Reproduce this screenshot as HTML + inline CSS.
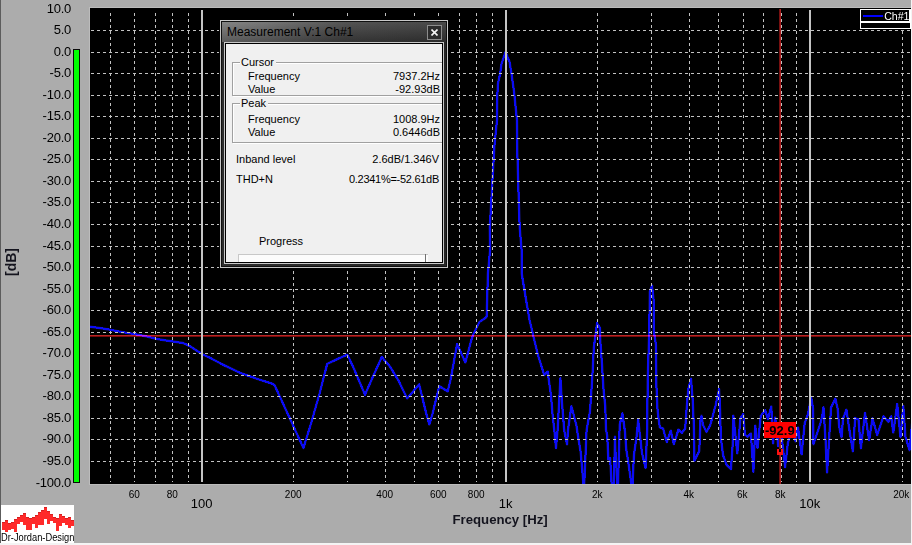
<!DOCTYPE html>
<html><head><meta charset="utf-8"><style>
*{margin:0;padding:0;box-sizing:border-box}
html,body{width:912px;height:545px;overflow:hidden;background:#acacac;font-family:"Liberation Sans",sans-serif;position:relative}
.yl{position:absolute;left:0;width:71px;text-align:right;font-size:13px;letter-spacing:-0.25px;line-height:16px;height:16px;color:#000}
.xs{position:absolute;top:488.5px;width:60px;text-align:center;font-size:10px;line-height:12px;color:#000}
.xb{position:absolute;top:497px;width:60px;text-align:center;font-size:13px;line-height:14px;color:#000}
.dlg{position:absolute;left:220px;top:20px;width:228px;height:248px}
.lbl{position:absolute;font-size:11px;line-height:13px;color:#000;white-space:nowrap}
.val{position:absolute;right:0;font-size:11px;line-height:13px;color:#000;white-space:nowrap;text-align:right}
</style></head><body>
<div style="position:absolute;left:0;top:0;width:1px;height:545px;background:#5c5c5c"></div>
<svg width="912" height="545" viewBox="0 0 912 545" style="position:absolute;left:0;top:0">
<defs><pattern id="hd" patternUnits="userSpaceOnUse" width="6" height="6"><rect x="1" y="0" width="3" height="6" fill="#c2c2c2"/></pattern><pattern id="vd" patternUnits="userSpaceOnUse" width="6" height="6"><rect x="0" y="1" width="6" height="3" fill="#c2c2c2"/></pattern><clipPath id="pc"><rect x="90" y="8" width="821" height="476"/></clipPath></defs>
<rect x="89" y="7" width="823" height="478" fill="#bcbcbc"/>
<rect x="90" y="8" width="821" height="476" fill="#000"/>
<g clip-path="url(#pc)"><path d="M90.0 326.8 L99.6 328.0 L111.1 329.9 L122.7 332.2 L134.3 334.1 L145.8 336.2 L155.8 338.7 L163.1 340.0 L173.2 341.6 L183.2 343.1 L189.3 345.8 L201.7 353.9 L210.0 357.8 L222.6 364.5 L240.2 372.9 L257.9 379.1 L272.8 383.9 L274.6 385.2 L292.4 424.0 L303.4 448.0 L310.9 424.0 L319.7 393.0 L324.1 375.8 L327.2 363.9 L336.4 359.5 L347.4 354.7 L354.0 368.8 L365.0 394.7 L371.7 379.4 L381.8 357.0 L390.0 366.6 L398.2 380.0 L407.2 398.5 L419.1 384.4 L426.1 413.0 L429.4 424.5 L432.7 413.0 L439.3 386.1 L447.7 391.4 L450.5 380.0 L457.1 344.2 L465.4 362.4 L471.4 339.8 L473.5 333.8 L479.4 322.0 L486.0 317.6 L486.7 316.2 L487.9 273.5 L490.1 250.0 L489.8 227.4 L492.2 184.4 L494.6 143.9 L497.0 120.0 L497.2 98.7 L497.9 84.0 L500.1 73.8 L501.6 63.5 L505.5 52.0 L509.6 62.0 L511.9 76.7 L514.0 91.4 L515.5 106.0 L517.0 120.0 L517.3 151.0 L518.5 191.6 L519.7 227.4 L521.6 250.0 L521.7 273.5 L526.1 300.0 L529.5 320.0 L533.2 335.4 L537.6 353.8 L544.2 375.0 L547.7 371.7 L548.8 379.9 L551.0 395.3 L552.7 416.3 L554.3 430.0 L556.0 448.0 L557.6 430.0 L560.4 378.3 L562.0 403.0 L564.2 430.0 L567.0 444.3 L568.0 430.0 L571.4 406.3 L576.3 425.0 L580.7 452.5 L584.0 490.0 L586.6 430.0 L589.9 411.9 L591.0 397.5 L592.7 370.0 L593.8 348.0 L595.5 334.8 L597.1 323.3 L599.9 328.0 L600.4 342.5 L602.0 364.6 L603.7 392.0 L605.3 406.3 L606.0 430.0 L607.2 435.5 L608.4 459.4 L610.1 458.2 L612.0 490.0 L613.7 490.0 L615.0 436.7 L615.5 452.2 L617.9 490.0 L619.7 424.8 L622.4 413.5 L625.0 432.0 L626.3 449.8 L628.6 464.2 L632.2 490.0 L634.0 454.6 L636.4 437.9 L638.2 420.0 L640.0 436.0 L642.0 453.2 L645.6 467.9 L647.2 430.0 L647.7 380.0 L649.3 330.0 L649.8 292.0 L652.0 285.4 L653.7 300.8 L653.7 330.0 L655.9 344.8 L656.4 385.0 L657.6 410.8 L659.8 427.4 L663.1 428.5 L666.8 442.0 L670.8 430.7 L673.8 444.0 L678.5 429.6 L681.9 432.9 L685.2 428.5 L686.3 413.0 L688.3 389.2 L691.0 378.8 L692.7 400.2 L693.8 425.0 L694.5 460.6 L699.3 451.0 L700.5 420.0 L701.5 415.7 L702.9 424.8 L706.5 432.0 L710.3 425.0 L715.8 404.6 L719.1 389.2 L720.2 413.5 L720.8 438.0 L723.2 455.8 L726.8 465.3 L731.0 469.0 L732.7 443.9 L733.4 415.7 L735.0 431.3 L737.3 453.3 L740.5 418.0 L743.2 414.2 L744.9 434.6 L747.6 436.8 L750.9 433.5 L753.4 471.7 L755.3 425.7 L757.5 447.8 L760.8 415.8 L765.2 410.3 L768.0 419.1 L771.3 406.5 L773.1 443.3 L775.2 417.5 L778.2 446.0 L781.0 430.0 L785.1 467.1 L787.8 443.3 L788.8 439.6 L792.0 428.0 L795.6 441.4 L798.0 427.4 L801.6 454.3 L804.7 423.0 L808.0 414.1 L811.3 397.6 L813.0 408.6 L813.5 444.2 L818.0 430.7 L820.2 424.0 L822.4 415.2 L823.5 407.5 L825.5 439.5 L827.1 472.4 L831.0 407.5 L835.4 398.7 L837.6 408.6 L839.3 427.4 L841.5 437.3 L843.1 418.5 L846.4 409.7 L849.7 431.8 L852.8 451.2 L855.2 418.0 L858.5 419.6 L860.9 448.2 L865.0 413.0 L869.1 440.1 L872.5 418.5 L877.2 435.0 L883.5 416.3 L888.4 421.9 L891.2 416.3 L893.3 432.5 L897.2 404.2 L900.5 437.0 L903.3 405.9 L905.5 437.0 L909.5 450.2 L912.0 424.0" fill="none" stroke="#141470" stroke-width="2.5" stroke-linejoin="round" stroke-linecap="round"/><path d="M90.0 326.8 L99.6 328.0 L111.1 329.9 L122.7 332.2 L134.3 334.1 L145.8 336.2 L155.8 338.7 L163.1 340.0 L173.2 341.6 L183.2 343.1 L189.3 345.8 L201.7 353.9 L210.0 357.8 L222.6 364.5 L240.2 372.9 L257.9 379.1 L272.8 383.9 L274.6 385.2 L292.4 424.0 L303.4 448.0 L310.9 424.0 L319.7 393.0 L324.1 375.8 L327.2 363.9 L336.4 359.5 L347.4 354.7 L354.0 368.8 L365.0 394.7 L371.7 379.4 L381.8 357.0 L390.0 366.6 L398.2 380.0 L407.2 398.5 L419.1 384.4 L426.1 413.0 L429.4 424.5 L432.7 413.0 L439.3 386.1 L447.7 391.4 L450.5 380.0 L457.1 344.2 L465.4 362.4 L471.4 339.8 L473.5 333.8 L479.4 322.0 L486.0 317.6 L486.7 316.2 L487.9 273.5 L490.1 250.0 L489.8 227.4 L492.2 184.4 L494.6 143.9 L497.0 120.0 L497.2 98.7 L497.9 84.0 L500.1 73.8 L501.6 63.5 L505.5 52.0 L509.6 62.0 L511.9 76.7 L514.0 91.4 L515.5 106.0 L517.0 120.0 L517.3 151.0 L518.5 191.6 L519.7 227.4 L521.6 250.0 L521.7 273.5 L526.1 300.0 L529.5 320.0 L533.2 335.4 L537.6 353.8 L544.2 375.0 L547.7 371.7 L548.8 379.9 L551.0 395.3 L552.7 416.3 L554.3 430.0 L556.0 448.0 L557.6 430.0 L560.4 378.3 L562.0 403.0 L564.2 430.0 L567.0 444.3 L568.0 430.0 L571.4 406.3 L576.3 425.0 L580.7 452.5 L584.0 490.0 L586.6 430.0 L589.9 411.9 L591.0 397.5 L592.7 370.0 L593.8 348.0 L595.5 334.8 L597.1 323.3 L599.9 328.0 L600.4 342.5 L602.0 364.6 L603.7 392.0 L605.3 406.3 L606.0 430.0 L607.2 435.5 L608.4 459.4 L610.1 458.2 L612.0 490.0 L613.7 490.0 L615.0 436.7 L615.5 452.2 L617.9 490.0 L619.7 424.8 L622.4 413.5 L625.0 432.0 L626.3 449.8 L628.6 464.2 L632.2 490.0 L634.0 454.6 L636.4 437.9 L638.2 420.0 L640.0 436.0 L642.0 453.2 L645.6 467.9 L647.2 430.0 L647.7 380.0 L649.3 330.0 L649.8 292.0 L652.0 285.4 L653.7 300.8 L653.7 330.0 L655.9 344.8 L656.4 385.0 L657.6 410.8 L659.8 427.4 L663.1 428.5 L666.8 442.0 L670.8 430.7 L673.8 444.0 L678.5 429.6 L681.9 432.9 L685.2 428.5 L686.3 413.0 L688.3 389.2 L691.0 378.8 L692.7 400.2 L693.8 425.0 L694.5 460.6 L699.3 451.0 L700.5 420.0 L701.5 415.7 L702.9 424.8 L706.5 432.0 L710.3 425.0 L715.8 404.6 L719.1 389.2 L720.2 413.5 L720.8 438.0 L723.2 455.8 L726.8 465.3 L731.0 469.0 L732.7 443.9 L733.4 415.7 L735.0 431.3 L737.3 453.3 L740.5 418.0 L743.2 414.2 L744.9 434.6 L747.6 436.8 L750.9 433.5 L753.4 471.7 L755.3 425.7 L757.5 447.8 L760.8 415.8 L765.2 410.3 L768.0 419.1 L771.3 406.5 L773.1 443.3 L775.2 417.5 L778.2 446.0 L781.0 430.0 L785.1 467.1 L787.8 443.3 L788.8 439.6 L792.0 428.0 L795.6 441.4 L798.0 427.4 L801.6 454.3 L804.7 423.0 L808.0 414.1 L811.3 397.6 L813.0 408.6 L813.5 444.2 L818.0 430.7 L820.2 424.0 L822.4 415.2 L823.5 407.5 L825.5 439.5 L827.1 472.4 L831.0 407.5 L835.4 398.7 L837.6 408.6 L839.3 427.4 L841.5 437.3 L843.1 418.5 L846.4 409.7 L849.7 431.8 L852.8 451.2 L855.2 418.0 L858.5 419.6 L860.9 448.2 L865.0 413.0 L869.1 440.1 L872.5 418.5 L877.2 435.0 L883.5 416.3 L888.4 421.9 L891.2 416.3 L893.3 432.5 L897.2 404.2 L900.5 437.0 L903.3 405.9 L905.5 437.0 L909.5 450.2 L912.0 424.0" fill="none" stroke="#0c0cf4" stroke-width="2" stroke-linejoin="round" stroke-linecap="round" shape-rendering="crispEdges"/></g>
<g shape-rendering="crispEdges">
<rect x="90" y="30" width="821" height="1" fill="url(#hd)"/>
<rect x="90" y="52" width="821" height="1" fill="url(#hd)"/>
<rect x="90" y="73" width="821" height="1" fill="url(#hd)"/>
<rect x="90" y="95" width="821" height="1" fill="url(#hd)"/>
<rect x="90" y="116" width="821" height="1" fill="url(#hd)"/>
<rect x="90" y="138" width="821" height="1" fill="url(#hd)"/>
<rect x="90" y="159" width="821" height="1" fill="url(#hd)"/>
<rect x="90" y="181" width="821" height="1" fill="url(#hd)"/>
<rect x="90" y="202" width="821" height="1" fill="url(#hd)"/>
<rect x="90" y="224" width="821" height="1" fill="url(#hd)"/>
<rect x="90" y="246" width="821" height="1" fill="url(#hd)"/>
<rect x="90" y="267" width="821" height="1" fill="url(#hd)"/>
<rect x="90" y="289" width="821" height="1" fill="url(#hd)"/>
<rect x="90" y="310" width="821" height="1" fill="url(#hd)"/>
<rect x="90" y="332" width="821" height="1" fill="url(#hd)"/>
<rect x="90" y="353" width="821" height="1" fill="url(#hd)"/>
<rect x="90" y="375" width="821" height="1" fill="url(#hd)"/>
<rect x="90" y="396" width="821" height="1" fill="url(#hd)"/>
<rect x="90" y="418" width="821" height="1" fill="url(#hd)"/>
<rect x="90" y="439" width="821" height="1" fill="url(#hd)"/>
<rect x="90" y="461" width="821" height="1" fill="url(#hd)"/>
<rect x="110" y="10" width="1" height="472" fill="url(#vd)"/>
<rect x="134" y="10" width="1" height="472" fill="url(#vd)"/>
<rect x="155" y="10" width="1" height="472" fill="url(#vd)"/>
<rect x="172" y="10" width="1" height="472" fill="url(#vd)"/>
<rect x="188" y="10" width="1" height="472" fill="url(#vd)"/>
<rect x="293" y="10" width="1" height="472" fill="url(#vd)"/>
<rect x="347" y="10" width="1" height="472" fill="url(#vd)"/>
<rect x="385" y="10" width="1" height="472" fill="url(#vd)"/>
<rect x="414" y="10" width="1" height="472" fill="url(#vd)"/>
<rect x="438" y="10" width="1" height="472" fill="url(#vd)"/>
<rect x="459" y="10" width="1" height="472" fill="url(#vd)"/>
<rect x="476" y="10" width="1" height="472" fill="url(#vd)"/>
<rect x="492" y="10" width="1" height="472" fill="url(#vd)"/>
<rect x="597" y="10" width="1" height="472" fill="url(#vd)"/>
<rect x="651" y="10" width="1" height="472" fill="url(#vd)"/>
<rect x="689" y="10" width="1" height="472" fill="url(#vd)"/>
<rect x="718" y="10" width="1" height="472" fill="url(#vd)"/>
<rect x="743" y="10" width="1" height="472" fill="url(#vd)"/>
<rect x="763" y="10" width="1" height="472" fill="url(#vd)"/>
<rect x="781" y="10" width="1" height="472" fill="url(#vd)"/>
<rect x="796" y="10" width="1" height="472" fill="url(#vd)"/>
<rect x="902" y="10" width="1" height="472" fill="url(#vd)"/>
<rect x="201" y="10" width="2" height="472" fill="#c4c4c4"/>
<rect x="505" y="10" width="2" height="472" fill="#c4c4c4"/>
<rect x="809" y="10" width="2" height="472" fill="#c4c4c4"/>
</g>
<g shape-rendering="crispEdges" style="mix-blend-mode:lighten">
<rect x="90" y="335" width="821" height="1" fill="#b82424"/><rect x="90" y="336" width="821" height="1" fill="#7a0c0c"/>
</g>
<rect x="779" y="9" width="1" height="475" fill="#781010" shape-rendering="crispEdges"/><rect x="780" y="9" width="1" height="475" fill="#aa2020" shape-rendering="crispEdges"/>
<rect x="764" y="422" width="32" height="16" fill="#ff0000" stroke="#a01010" stroke-width="0" shape-rendering="crispEdges"/>
<rect x="777" y="449" width="6" height="6" fill="#ff1010" shape-rendering="crispEdges"/>
<rect x="779" y="449" width="2" height="3" fill="#000" shape-rendering="crispEdges"/>
<text x="765" y="435" font-family="Liberation Sans" font-size="13" font-weight="bold" fill="#000">-92.9</text>
<g shape-rendering="crispEdges"><rect x="860" y="9" width="51" height="20" fill="#fff"/><rect x="861" y="10" width="48" height="11" fill="#000"/><rect x="861" y="23" width="49" height="5" fill="#000"/><rect x="863" y="15" width="20" height="2" fill="#0000ff"/></g>
<text x="884.2" y="20" font-family="Liberation Sans" font-size="10.6" fill="#fff">Ch#1</text>
<g shape-rendering="crispEdges"><rect x="73" y="49" width="7" height="434" fill="#0a0a0a"/><rect x="74" y="50" width="5" height="432" fill="#00ff00"/></g>
</svg>
<div style="position:absolute;left:911px;top:0;width:1px;height:545px;background:#f4f4f4"></div>
<div style="position:absolute;left:0;top:543px;width:912px;height:2px;background:#f4f4f4"></div>
<div class="yl" style="top:1px">10.0</div>
<div class="yl" style="top:22px">5.0</div>
<div class="yl" style="top:44px">0.0</div>
<div class="yl" style="top:65px">-5.0</div>
<div class="yl" style="top:87px">-10.0</div>
<div class="yl" style="top:108px">-15.0</div>
<div class="yl" style="top:130px">-20.0</div>
<div class="yl" style="top:151px">-25.0</div>
<div class="yl" style="top:173px">-30.0</div>
<div class="yl" style="top:194px">-35.0</div>
<div class="yl" style="top:216px">-40.0</div>
<div class="yl" style="top:238px">-45.0</div>
<div class="yl" style="top:259px">-50.0</div>
<div class="yl" style="top:281px">-55.0</div>
<div class="yl" style="top:302px">-60.0</div>
<div class="yl" style="top:324px">-65.0</div>
<div class="yl" style="top:345px">-70.0</div>
<div class="yl" style="top:367px">-75.0</div>
<div class="yl" style="top:388px">-80.0</div>
<div class="yl" style="top:410px">-85.0</div>
<div class="yl" style="top:431px">-90.0</div>
<div class="yl" style="top:453px">-95.0</div>
<div class="yl" style="top:475px">-100.0</div>
<div class="xs" style="left:104.3px">60</div>
<div class="xs" style="left:142.2px">80</div>
<div class="xs" style="left:263.2px">200</div>
<div class="xs" style="left:354.7px">400</div>
<div class="xs" style="left:408.3px">600</div>
<div class="xs" style="left:446.2px">800</div>
<div class="xs" style="left:567.2px">2k</div>
<div class="xs" style="left:658.7px">4k</div>
<div class="xs" style="left:712.3px">6k</div>
<div class="xs" style="left:750.2px">8k</div>
<div class="xs" style="left:871.2px">20k</div>
<div class="xb" style="left:171.7px">100</div>
<div class="xb" style="left:475.7px">1k</div>
<div class="xb" style="left:779.7px">10k</div>
<div style="position:absolute;left:452.5px;top:512px;font-size:13.2px;font-weight:bold;line-height:16px;color:#14141e">Frequency [Hz]</div>
<div style="position:absolute;left:3px;top:276px;transform:rotate(-90deg);transform-origin:0 0;font-size:14px;font-weight:bold;line-height:16px;color:#14141e">[dB]</div>
<div style="position:absolute;left:219px;top:19px;width:230px;height:250px;background:#000"></div><div class="dlg">
<div style="position:absolute;left:0;top:0;width:228px;height:248px;background:#c8c8c8"></div>
<div style="position:absolute;left:1px;top:1px;width:226px;height:246px;background:#101010"></div>
<div style="position:absolute;left:2px;top:2px;width:224px;height:20px;background:linear-gradient(90deg,#7a7a7a 0%,#6a6a6a 20%,#454545 55%,#3a3a3a 100%)"></div>
<div style="position:absolute;left:2px;top:2px;width:224px;height:20px;background:linear-gradient(180deg,rgba(255,255,255,0.08),rgba(0,0,0,0.25))"></div>
<div style="position:absolute;left:2px;top:22px;width:224px;height:224px;background:linear-gradient(90deg,#2e2e2e,#262626)"></div>
<div style="position:absolute;left:7px;top:5px;font-size:12px;line-height:15px;color:#000;white-space:nowrap">Measurement V:1 Ch#1</div>
<div style="position:absolute;left:207px;top:5px;width:15px;height:15px;border:1px solid #8c8c8c;background:#2c2c2c"></div>
<svg style="position:absolute;left:211px;top:9px" width="7" height="7"><path d="M0.5 0.5L6.5 6.5M6.5 0.5L0.5 6.5" stroke="#f4f4f4" stroke-width="1.6"/></svg>
<div style="position:absolute;left:4px;top:22px;width:220px;height:222px;background:#c8c8c8"></div>
<div style="position:absolute;left:5px;top:23px;width:218px;height:220px;background:#000"></div>
<div style="position:absolute;left:6px;top:24px;width:216px;height:218px;background:#f0f0f0;overflow:hidden">
  <div style="position:absolute;left:6px;top:18px;width:230px;height:34px;border:1px solid #a0a0a0;box-shadow:1px 1px 0 #fff inset, 1px 1px 0 #fff"></div>
  <div class="lbl" style="left:14px;top:12px;background:#f0f0f0;padding:0 2px 0 1px">Cursor</div>
  <div class="lbl" style="left:22px;top:26px">Frequency</div>
  <div class="lbl" style="left:22px;top:39px">Value</div>
  <div class="val" style="right:2px;top:26px">7937.2Hz</div>
  <div class="val" style="right:2px;top:39px">-92.93dB</div>
  <div style="position:absolute;left:6px;top:59px;width:230px;height:40px;border:1px solid #a0a0a0;box-shadow:1px 1px 0 #fff inset, 1px 1px 0 #fff"></div>
  <div class="lbl" style="left:14px;top:53px;background:#f0f0f0;padding:0 2px 0 1px">Peak</div>
  <div class="lbl" style="left:22px;top:69px">Frequency</div>
  <div class="lbl" style="left:22px;top:82px">Value</div>
  <div class="val" style="right:2px;top:69px">1008.9Hz</div>
  <div class="val" style="right:2px;top:82px">0.6446dB</div>
  <div class="lbl" style="left:10px;top:109px">Inband level</div>
  <div class="val" style="right:3px;top:109px">2.6dB/1.346V</div>
  <div class="lbl" style="left:10px;top:129px">THD+N</div>
  <div class="val" style="right:3px;top:129px;letter-spacing:-0.28px">0.2341%=-52.61dB</div>
  <div class="lbl" style="left:33px;top:191px">Progress</div>
  <div style="position:absolute;left:12px;top:210px;width:190px;height:14px;border-top:1px solid #c8c8c8;border-left:1px solid #c8c8c8;background:#fcfcfc"></div>
  <div style="position:absolute;left:199px;top:210px;width:1px;height:8px;background:#707070"></div>
</div>
</div>
<div style="position:absolute;left:1px;top:505px;width:73px;height:38px;background:#fff;overflow:hidden">
<svg width="73" height="28" style="position:absolute;left:0;top:0" shape-rendering="crispEdges"><rect x="1" y="17" width="3" height="8" fill="#ff2a2a"/><rect x="1" y="17" width="3" height="1" fill="#d42020"/><rect x="4" y="15" width="3" height="12" fill="#ff2a2a"/><rect x="4" y="15" width="3" height="1" fill="#d42020"/><rect x="7" y="18" width="3" height="7" fill="#ff2a2a"/><rect x="7" y="18" width="3" height="1" fill="#d42020"/><rect x="10" y="17" width="3" height="7" fill="#ff2a2a"/><rect x="10" y="17" width="3" height="1" fill="#d42020"/><rect x="13" y="14" width="3" height="13" fill="#ff2a2a"/><rect x="13" y="14" width="3" height="1" fill="#d42020"/><rect x="16" y="12" width="3" height="7" fill="#ff2a2a"/><rect x="16" y="12" width="3" height="1" fill="#d42020"/><rect x="19" y="10" width="3" height="7" fill="#ff2a2a"/><rect x="19" y="10" width="3" height="1" fill="#d42020"/><rect x="22" y="8" width="3" height="12" fill="#ff2a2a"/><rect x="22" y="8" width="3" height="1" fill="#d42020"/><rect x="25" y="12" width="3" height="13" fill="#ff2a2a"/><rect x="25" y="12" width="3" height="1" fill="#d42020"/><rect x="28" y="13" width="3" height="12" fill="#ff2a2a"/><rect x="28" y="13" width="3" height="1" fill="#d42020"/><rect x="31" y="12" width="3" height="7" fill="#ff2a2a"/><rect x="31" y="12" width="3" height="1" fill="#d42020"/><rect x="34" y="10" width="3" height="13" fill="#ff2a2a"/><rect x="34" y="10" width="3" height="1" fill="#d42020"/><rect x="37" y="7" width="3" height="13" fill="#ff2a2a"/><rect x="37" y="7" width="3" height="1" fill="#d42020"/><rect x="40" y="5" width="3" height="15" fill="#ff2a2a"/><rect x="40" y="5" width="3" height="1" fill="#d42020"/><rect x="43" y="2" width="3" height="12" fill="#ff2a2a"/><rect x="43" y="2" width="3" height="1" fill="#d42020"/><rect x="46" y="6" width="3" height="13" fill="#ff2a2a"/><rect x="46" y="6" width="3" height="1" fill="#d42020"/><rect x="49" y="9" width="3" height="7" fill="#ff2a2a"/><rect x="49" y="9" width="3" height="1" fill="#d42020"/><rect x="52" y="12" width="3" height="6" fill="#ff2a2a"/><rect x="52" y="12" width="3" height="1" fill="#d42020"/><rect x="55" y="13" width="3" height="13" fill="#ff2a2a"/><rect x="55" y="13" width="3" height="1" fill="#d42020"/><rect x="58" y="9" width="3" height="12" fill="#ff2a2a"/><rect x="58" y="9" width="3" height="1" fill="#d42020"/><rect x="61" y="11" width="3" height="7" fill="#ff2a2a"/><rect x="61" y="11" width="3" height="1" fill="#d42020"/><rect x="64" y="13" width="3" height="7" fill="#ff2a2a"/><rect x="64" y="13" width="3" height="1" fill="#d42020"/><rect x="67" y="12" width="3" height="11" fill="#ff2a2a"/><rect x="67" y="12" width="3" height="1" fill="#d42020"/><rect x="70" y="15" width="3" height="6" fill="#ff2a2a"/><rect x="70" y="15" width="3" height="1" fill="#d42020"/></svg>
<div style="position:absolute;left:0px;top:27px;font-size:10px;line-height:11px;color:#000;white-space:nowrap;transform:scaleX(0.93);transform-origin:0 0">Dr-Jordan-Design</div>
</div>
</body></html>
